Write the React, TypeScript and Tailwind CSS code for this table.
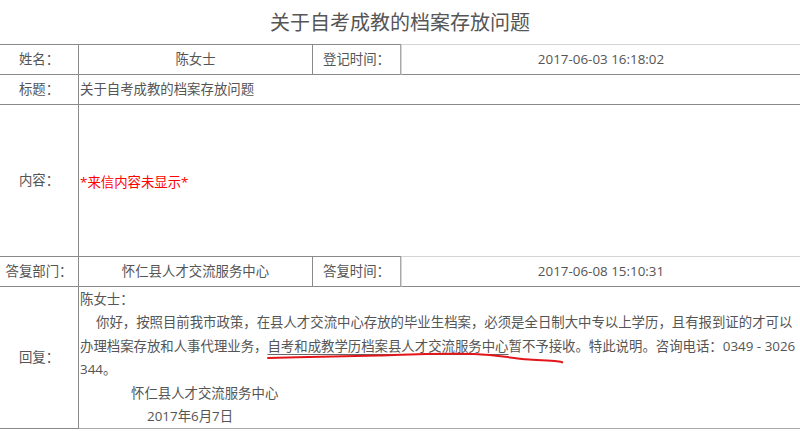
import React from "react";

const font = { fontFamily: '"Open Sans", "Noto Sans CJK SC", sans-serif' };

export default function App() {
  const label = "flex items-center justify-center border-r border-b border-[#8a8a8a] text-[#555]";
  return (
    <div className="w-[800px] h-[431px] overflow-hidden bg-white text-[#555]" style={font}>
      <div className="h-[44px] flex items-center justify-center text-[20px] text-[#555] pt-[1px]">
        关于自考成教的档案存放问题
      </div>
      <div className="grid grid-cols-[79px_234px_88px_1fr] text-[13.4px] border-t border-[#8a8a8a]">
        {/* row 1 */}
        <div className={`${label} h-[30px]`}>姓名：</div>
        <div className="flex items-center justify-center border-r border-b border-[#8a8a8a] h-[30px]">陈女士</div>
        <div className={`${label} h-[30px] border-r-[#aaa]`}>登记时间：</div>
        <div className="flex items-center justify-center border-b border-[#8a8a8a] h-[30px] border-l border-l-[#d4d4d4] border-t border-t-[#d4d4d4] -mt-px h-[31px]">
          2017-06-03 16:18:02
        </div>
        {/* row 2 */}
        <div className={`${label} h-[30px]`}>标题：</div>
        <div className="col-span-3 flex items-center pl-px border-b border-[#8a8a8a] h-[30px]">
          关于自考成教的档案存放问题
        </div>
        {/* row 3 */}
        <div className={`${label} h-[152px]`}>内容：</div>
        <div className="col-span-3 flex items-center pl-px border-b border-[#8a8a8a] h-[152px] text-[#ff0000] pt-[4px]">
          *来信内容未显示*
        </div>
        {/* row 4 */}
        <div className={`${label} h-[30px]`}>答复部门：</div>
        <div className="flex items-center justify-center border-r border-b border-[#8a8a8a] h-[30px]">怀仁县人才交流服务中心</div>
        <div className={`${label} h-[30px] border-r-[#aaa]`}>答复时间：</div>
        <div className="flex items-center justify-center border-b border-[#8a8a8a] border-l border-l-[#d4d4d4] border-t border-t-[#d4d4d4] -mt-px h-[31px]">
          2017-06-08 15:10:31
        </div>
        {/* row 5 */}
        <div className={`${label} h-[142px]`}>回复：</div>
        <div className="col-span-3 relative border-b border-[#aaa] h-[142px] pl-px pt-px leading-[23.4px] whitespace-nowrap">
          <div>陈女士：</div>
          <div className="pl-[16px]">
            你好，按照目前我市政策，在县人才交流中心存放的毕业生档案，必须是全日制大中专以上学历，且有报到证的才可以
          </div>
          <div>
            办理档案存放和人事代理业务，<span className="underline underline-offset-[3px] decoration-[#666]">自考和成教学历档案县人才交流服务中心</span>暂不予接收。特此说明。咨询电话：0349 - 3026
          </div>
          <div>344。</div>
          <div className="pl-[51px]">怀仁县人才交流服务中心</div>
          <div className="pl-[67px]">2017年6月7日</div>
          <svg className="absolute left-0 top-0 pointer-events-none" width="721" height="141" viewBox="0 0 721 141">
            <path
              d="M189 71 C 230 70, 280 69, 300 68.5 C 330 67.5, 360 66, 395 67 C 420 68, 430 71, 450 72.5 C 470 74, 485 74, 483 75.5"
              fill="none"
              stroke="#e3151a"
              strokeWidth="2"
              strokeLinecap="round"
            />
          </svg>
        </div>
      </div>
    </div>
  );
}
